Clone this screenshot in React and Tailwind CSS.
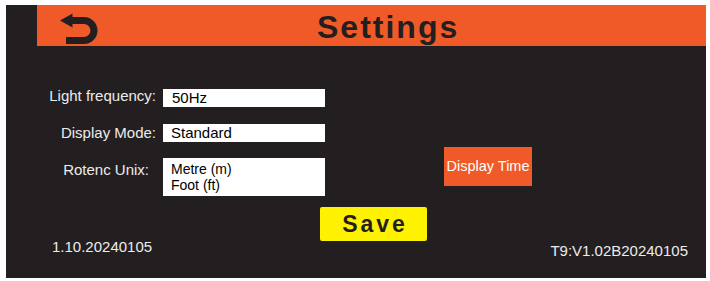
import React from "react";

function BackIcon() {
  return (
    <svg width="38" height="31" viewBox="0 0 38 31" className="shrink-0 mt-[6px]">
      <polygon points="0,7.5 12.5,0.5 12.5,14.5" fill="#231f20" />
      <path
        d="M11 7.5 H24 A10 10 0 0 1 24 27.5 H6"
        fill="none"
        stroke="#231f20"
        strokeWidth="7"
      />
    </svg>
  );
}

export default function App() {
  return (
    <div className="min-h-screen bg-white pt-[5px] pl-[6px] font-['Liberation_Sans',Arial,sans-serif]">
      <div className="w-[700px] h-[273px] bg-[#231f20] flex flex-col">
        <div className="ml-[31px] h-[41px] bg-[#ef5a28] flex items-center pl-[23px]">
          <BackIcon />
          <h1 className="ml-[219px] mt-[3px] text-[32px] font-bold tracking-[2px] leading-none text-[#231f20]">
            Settings
          </h1>
        </div>

        <div className="mt-[43px] flex items-start">
          <div className="grid grid-cols-[150px_162px] gap-x-[7px] gap-y-[17px] text-[15px]">
            <div className="text-right text-[#ececec] leading-[18px] -mt-[2px]">Light frequency:</div>
            <div className="h-[18px] bg-white text-black leading-[18px] pl-[9px]">50Hz</div>

            <div className="text-right text-[#ececec] leading-[18px]">Display Mode:</div>
            <div className="h-[18px] bg-white text-black leading-[18px] pl-[8px]">Standard</div>

            <div className="text-right text-[#ececec] leading-[18px] mt-[2px] pr-[7px]">Rotenc Unix:</div>
            <div className="h-[38px] bg-white text-black text-[14px] leading-[16px] pl-[8px] pt-[3px] -mt-[1px] flex flex-col">
              <span>Metre (m)</span>
              <span>Foot (ft)</span>
            </div>
          </div>
          <div className="ml-[119px] mt-[58px] w-[88px] h-[39px] bg-[#ef5a28] flex items-center justify-center text-[14.5px] text-white whitespace-nowrap">
            Display Time
          </div>
        </div>

        <div className="mt-[11px] flex items-start">
          <div className="w-[314px] pl-[46px] pt-[32px] text-[15px] leading-[15px] text-[#ececec]">
            1.10.20240105
          </div>
          <div className="w-[107px] h-[34px] bg-[#fff200] rounded-[2px] flex items-center justify-center text-[23px] font-bold tracking-[3px] text-[#231f20] leading-none pl-[3px]">
            Save
          </div>
          <div className="ml-auto mr-[18px] pt-[36px] text-[15px] leading-[15px] text-[#ececec]">
            T9:V1.02B20240105
          </div>
        </div>
      </div>
    </div>
  );
}
